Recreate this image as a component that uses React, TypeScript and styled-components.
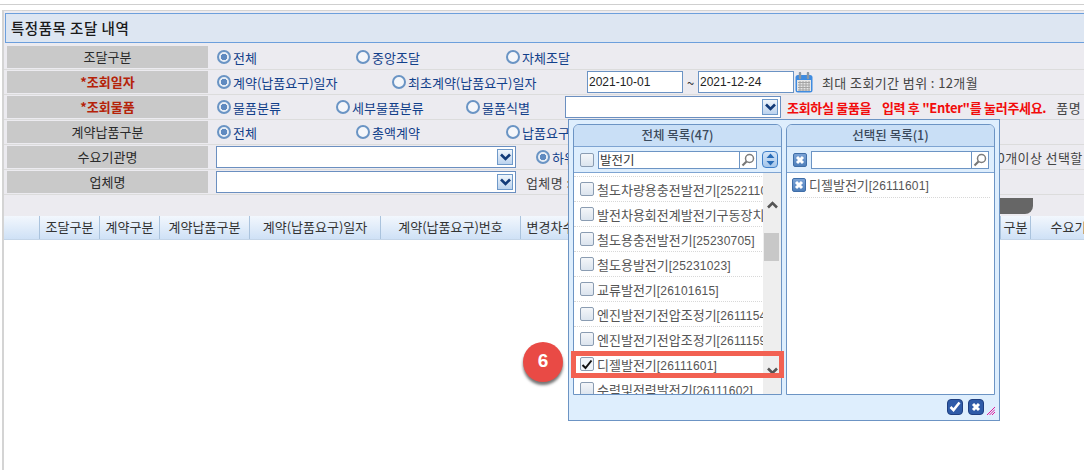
import { FC, ReactElement } from 'react';
import styled, { createGlobalStyle } from 'styled-components';

const GlobalStyle = createGlobalStyle`
    html, body {
        margin: 0;
        padding: 0;
        background: #ffffff;
    }
    body {
        width: 1084px;
        height: 470px;
        overflow: hidden;
        font-family: "Noto Sans CJK KR", "Liberation Sans", sans-serif;
        font-size: 13px;
        color: #333333;
    }
`;

const Chevron: FC<{ up?: boolean; color?: string }> = ({ up, color = '#123a78' }): ReactElement => (
    <svg width="11" height="8" viewBox="0 0 11 8">
        <path d={up ? 'M1 6.5 L5.5 2 L10 6.5' : 'M1 1.5 L5.5 6 L10 1.5'} fill="none" stroke={color} strokeWidth="2.6" />
    </svg>
);

const Magnifier: FC = (): ReactElement => (
    <svg width="14" height="14" viewBox="0 0 14 14">
        <circle cx="8.5" cy="5.5" r="4" fill="#ffffff" stroke="#7c7c7c" strokeWidth="1.5" />
        <path d="M5.5 8.5 L1.5 12.5" stroke="#777777" strokeWidth="2.2" />
    </svg>
);

const CrossMark: FC = (): ReactElement => (
    <svg width="10" height="10" viewBox="0 0 10 10">
        <path d="M2 2 L8 8 M8 2 L2 8" stroke="#ffffff" strokeWidth="3" />
    </svg>
);

const CheckMark: FC<{ color?: string; weight?: number }> = ({ color = '#ffffff', weight = 2.6 }): ReactElement => (
    <svg width="12" height="11" viewBox="0 0 12 11">
        <path d="M1.5 6 L4.5 9 L10.5 1.5" fill="none" stroke={color} strokeWidth={weight} />
    </svg>
);

const CalendarIcon: FC = (): ReactElement => (
    <svg width="18" height="21" viewBox="0 0 18 21">
        <rect x="0.5" y="3" width="17" height="17.5" rx="2.5" fill="#3f8be0" />
        <rect x="2" y="8" width="14" height="11" fill="#e6e6e6" />
        <path d="M5 1 V6 M13 1 V6" stroke="#8b97a5" strokeWidth="2.4" strokeLinecap="round" />
        <path
            d="M3 10.5 H15 M3 13 H15 M3 15.5 H15 M3 18 H15 M5 9 V19 M8 9 V19 M11 9 V19 M14 9 V19"
            stroke="#a4a4a4"
            strokeWidth="1"
        />
    </svg>
);

type RadioItem = { label: string; checked?: boolean; width: number };

const RadioGroup: FC<{ items: RadioItem[] }> = ({ items }): ReactElement => (
    <>
        {items.map((item) => (
            <RadioLabel key={item.label} $width={item.width}>
                <RadioDot $checked={item.checked} />
                {item.label}
            </RadioLabel>
        ))}
    </>
);

const LIST_ITEMS: { name: string; code: string; checked?: boolean }[] = [
    { name: '철도차량용충전발전기', code: '[25221107]' },
    { name: '발전차용회전계발전기구동장치', code: '[25171901]' },
    { name: '철도용충전발전기', code: '[25230705]' },
    { name: '철도용발전기', code: '[25231023]' },
    { name: '교류발전기', code: '[26101615]' },
    { name: '엔진발전기전압조정기', code: '[26111541]' },
    { name: '엔진발전기전압조정기', code: '[26111599]' },
    { name: '디젤발전기', code: '[26111601]', checked: true },
    { name: '수력및전력발전기', code: '[26111602]' }
];

const GRID_COLUMNS: { label: string; width: number }[] = [
    { label: '', width: 36 },
    { label: '조달구분', width: 60 },
    { label: '계약구분', width: 60 },
    { label: '계약납품구분', width: 90 },
    { label: '계약(납품요구)일자', width: 131 },
    { label: '계약(납품요구)번호', width: 140 },
    { label: '변경차수', width: 60 },
    { label: '', width: 420 },
    { label: '구분', width: 30 },
    { label: '수요기관명', width: 100 }
];

const App: FC = (): ReactElement => {
    return (
        <Page>
            <GlobalStyle />
            <TopRule />
            <Frame>
                <Search>
                    <Title>특정품목 조달 내역</Title>
                    <Row>
                        <RowLabel>조달구분</RowLabel>
                        <RowBody>
                            <RadioGroup
                                items={[
                                    { label: '전체', checked: true, width: 139 },
                                    { label: '중앙조달', width: 150 },
                                    { label: '자체조달', width: 100 }
                                ]}
                            />
                        </RowBody>
                    </Row>
                    <Row>
                        <RowLabel $required>*조회일자</RowLabel>
                        <RowBody>
                            <RadioGroup
                                items={[
                                    { label: '계약(납품요구)일자', checked: true, width: 175 },
                                    { label: '최초계약(납품요구)일자', width: 195 }
                                ]}
                            />
                            <DateInput value="2021-10-01" readOnly />
                            <Tilde>~</Tilde>
                            <DateInput value="2021-12-24" readOnly />
                            <CalendarSlot>
                                <CalendarIcon />
                            </CalendarSlot>
                            <Hint>최대 조회기간 범위 : 12개월</Hint>
                        </RowBody>
                    </Row>
                    <Row>
                        <RowLabel $required>*조회물품</RowLabel>
                        <RowBody>
                            <RadioGroup
                                items={[
                                    { label: '물품분류', checked: true, width: 119 },
                                    { label: '세부물품분류', width: 130 },
                                    { label: '물품식별', width: 99 }
                                ]}
                            />
                            <ComboBox $width={216}>
                                <ComboArrow>
                                    <Chevron />
                                </ComboArrow>
                            </ComboBox>
                            <Warning>조회하실 물품을&nbsp;&nbsp;&nbsp; 입력 후 "Enter"를 눌러주세요.</Warning>
                            <Hint $gap={10}>품명</Hint>
                        </RowBody>
                    </Row>
                    <Row>
                        <RowLabel>계약납품구분</RowLabel>
                        <RowBody>
                            <RadioGroup
                                items={[
                                    { label: '전체', checked: true, width: 139 },
                                    { label: '총액계약', width: 150 },
                                    { label: '납품요구', width: 100 }
                                ]}
                            />
                        </RowBody>
                    </Row>
                    <Row>
                        <RowLabel>수요기관명</RowLabel>
                        <RowBody $tight>
                            <ComboBox $width={300}>
                                <ComboArrow>
                                    <Chevron />
                                </ComboArrow>
                            </ComboBox>
                            <RadioSpacer />
                            <RadioGroup items={[{ label: '하위기관포함', checked: true, width: 454 }]} />
                            <Hint>10개이상 선택할</Hint>
                        </RowBody>
                    </Row>
                    <Row>
                        <RowLabel>업체명</RowLabel>
                        <RowBody $tight>
                            <ComboBox $width={300}>
                                <ComboArrow>
                                    <Chevron />
                                </ComboArrow>
                            </ComboBox>
                            <Hint $gap={10}>업체명 :</Hint>
                        </RowBody>
                    </Row>
                    <ButtonBar>
                        <DarkButton />
                    </ButtonBar>
                </Search>
                <GridHead>
                    {GRID_COLUMNS.map((column, index) => (
                        <GridCell key={index} $width={column.width}>
                            {column.label}
                        </GridCell>
                    ))}
                </GridHead>
            </Frame>

            <Popup>
                <PanelRow>
                    <Panel>
                        <PanelTitle>전체 목록(47)</PanelTitle>
                        <PanelTools>
                            <CheckBox />
                            <SearchField $width={159}>
                                <SearchText>발전기</SearchText>
                                <SearchButton>
                                    <Magnifier />
                                </SearchButton>
                            </SearchField>
                            <SortButton>
                                <svg width="9" height="13" viewBox="0 0 9 13">
                                    <path d="M4.5 0.5 L8.5 5 H0.5 Z M0.5 8 H8.5 L4.5 12.5 Z" fill="#2a6db8" />
                                </svg>
                            </SortButton>
                        </PanelTools>
                        <ListArea>
                            <ListScroll>
                                <TopFade />
                                {LIST_ITEMS.map((item) => (
                                    <ListRow key={item.code}>
                                        <CheckBox $checked={item.checked}>
                                            {item.checked && <CheckMark color="#111111" weight={2} />}
                                        </CheckBox>
                                        <ListText>
                                            {item.name}
                                            <Code>{item.code}</Code>
                                        </ListText>
                                    </ListRow>
                                ))}
                            </ListScroll>
                            <ScrollTrack>
                                <ScrollArrow>
                                    <Chevron up color="#555555" />
                                </ScrollArrow>
                                <ScrollThumb />
                                <ScrollArrow $bottom>
                                    <Chevron color="#555555" />
                                </ScrollArrow>
                            </ScrollTrack>
                        </ListArea>
                    </Panel>
                    <Panel>
                        <PanelTitle>선택된 목록(1)</PanelTitle>
                        <PanelTools>
                            <CrossBox>
                                <CrossMark />
                            </CrossBox>
                            <SearchField $width={178}>
                                <SearchText />
                                <SearchButton>
                                    <Magnifier />
                                </SearchButton>
                            </SearchField>
                        </PanelTools>
                        <ListArea>
                            <SelectedRow>
                                <CrossBox>
                                    <CrossMark />
                                </CrossBox>
                                <ListText>
                                    디젤발전기<Code>[26111601]</Code>
                                </ListText>
                            </SelectedRow>
                        </ListArea>
                    </Panel>
                </PanelRow>
                <PopupFooter>
                    <RoundButton>
                        <CheckMark />
                    </RoundButton>
                    <RoundButton>
                        <CrossMark />
                    </RoundButton>
                    <ResizeGrip>
                        <svg width="8" height="8" viewBox="0 0 8 8">
                            <path d="M0 8 L8 0 M2.5 8 L8 2.5 M5 8 L8 5" stroke="#e0189a" strokeWidth="1" />
                        </svg>
                    </ResizeGrip>
                </PopupFooter>
            </Popup>

            <Highlight />
            <StepBadge>6</StepBadge>
        </Page>
    );
};

const Page = styled.div`
    position: relative;
    width: 1084px;
    height: 470px;
    overflow: hidden;
`;
const TopRule = styled.div`
    height: 4px;
    border-bottom: 1px solid #cfcfcf;
`;
const Frame = styled.div`
    margin: 5px 0 0 2px;
    height: 460px;
    border-top: 1px solid #d4d4d4;
    border-left: 2px solid #d4d4d4;
    box-sizing: border-box;
`;
const Search = styled.div`
    height: 205px;
    background: #ecebf0;
    padding-top: 2px;
    box-sizing: border-box;
`;
const Title = styled.div`
    height: 30px;
    margin: 0 0 2px 1px;
    padding-left: 5px;
    box-sizing: border-box;
    border: 1px solid #6c9fdc;
    border-right: none;
    background: #dde6f2;
    font-size: 14.5px;
    font-weight: 500;
    line-height: 27px;
    letter-spacing: 0.5px;
    color: #1a1a1a;
`;
const Row = styled.div`
    display: flex;
    height: 25px;
    padding: 1px 0 1px 3px;
    box-sizing: border-box;
    border-bottom: 1px solid #dcdcdc;
`;
const RowLabel = styled.div<{ $required?: boolean }>`
    width: 201px;
    flex: none;
    text-align: center;
    background: #c9c9c9;
    line-height: 22px;
    font-weight: ${(p) => (p.$required ? 700 : 400)};
    color: ${(p) => (p.$required ? '#b52208' : '#2a2a2a')};
`;
const RowBody = styled.div<{ $tight?: boolean }>`
    display: flex;
    align-items: center;
    flex: 1;
    min-width: 0;
    white-space: nowrap;
    padding-left: ${(p) => (p.$tight ? 8 : 9)}px;
`;
const RadioLabel = styled.label<{ $width: number }>`
    display: flex;
    align-items: center;
    flex: none;
    width: ${(p) => p.$width}px;
    color: #12408a;
`;
const RadioDot = styled.span<{ $checked?: boolean }>`
    width: 14px;
    height: 14px;
    margin-right: 2px;
    flex: none;
    border-radius: 50%;
    box-sizing: border-box;
    border: 2.5px solid #6a94c4;
    background: ${(p) => (p.$checked ? 'radial-gradient(circle, #5f8ac0 0 3px, #e7edf5 3.5px)' : '#f4f6fa')};
`;
const RadioSpacer = styled.span`
    width: 20px;
    flex: none;
`;
const DateInput = styled.input`
    width: 96px;
    height: 22px;
    padding: 0 0 0 1px;
    box-sizing: border-box;
    border: 1px solid #6b93c4;
    background: #ffffff;
    font-family: "Liberation Sans", sans-serif;
    font-size: 12px;
    color: #222222;
    outline: none;
`;
const Tilde = styled.span`
    width: 15px;
    text-align: center;
    flex: none;
    color: #333333;
`;
const CalendarSlot = styled.span`
    display: flex;
    margin: 0 9px 0 1px;
`;
const Hint = styled.span<{ $gap?: number }>`
    margin-left: ${(p) => p.$gap ?? 0}px;
    color: #444444;
    letter-spacing: 0.4px;
`;
const ComboBox = styled.div<{ $width: number }>`
    display: flex;
    justify-content: flex-end;
    align-items: center;
    flex: none;
    width: ${(p) => p.$width}px;
    height: 22px;
    padding-right: 2px;
    box-sizing: border-box;
    border: 1px solid #6b8fc0;
    background: #ffffff;
`;
const ComboArrow = styled.span`
    display: flex;
    align-items: center;
    justify-content: center;
    width: 16px;
    height: 16px;
    box-sizing: border-box;
    border: 1px solid #6f99c9;
    background: linear-gradient(#f0f6fc, #bcd3ee);
`;
const Warning = styled.span`
    margin-left: 6px;
    color: #f20c0c;
    font-weight: 700;
    font-size: 13px;
    letter-spacing: -0.3px;
`;
const ButtonBar = styled.div`
    display: flex;
    justify-content: flex-end;
    height: 20px;
    padding: 3px 51px 0 0;
    box-sizing: border-box;
`;
const DarkButton = styled.div`
    width: 120px;
    height: 16px;
    background: #666666;
    border-radius: 0 0 8px 0;
`;
const GridHead = styled.div`
    display: flex;
    height: 24px;
    box-sizing: border-box;
    border-bottom: 1px solid #c4d5e8;
    background: linear-gradient(#f2f7fd, #cfe1f6);
    white-space: nowrap;
    overflow: hidden;
`;
const GridCell = styled.div<{ $width: number }>`
    flex: none;
    width: ${(p) => p.$width}px;
    box-sizing: border-box;
    border-right: 1px solid #aac3dd;
    text-align: center;
    line-height: 22px;
    color: #333333;
`;
const Popup = styled.div`
    position: absolute;
    left: 568px;
    top: 119px;
    width: 432px;
    height: 302px;
    padding: 4px 4px 0 4px;
    box-sizing: border-box;
    border: 1px solid #6c94c4;
    background: #deeefd;
`;
const PanelRow = styled.div`
    display: flex;
    gap: 4px;
    height: 271px;
`;
const Panel = styled.div`
    width: 209px;
    height: 271px;
    display: flex;
    flex-direction: column;
    box-sizing: border-box;
    border: 1px solid #6c94c4;
    border-radius: 6px 6px 0 0;
    overflow: hidden;
`;
const PanelTitle = styled.div`
    height: 22px;
    flex: none;
    box-sizing: border-box;
    border-bottom: 1px solid #7ea4d2;
    background: #c9dff6;
    text-align: center;
    line-height: 19px;
    font-size: 12.5px;
    font-weight: 500;
    color: #3b4a5c;
`;
const PanelTools = styled.div`
    display: flex;
    align-items: center;
    height: 26px;
    flex: none;
    padding-left: 6px;
    box-sizing: border-box;
    border-bottom: 1px solid #7ea4d2;
    background: #deeefd;
`;
const CheckBox = styled.span<{ $checked?: boolean }>`
    display: flex;
    align-items: center;
    justify-content: center;
    width: 14px;
    height: 14px;
    flex: none;
    box-sizing: border-box;
    border: 1px solid #8a9cb2;
    border-radius: 2px;
    background: ${(p) => (p.$checked ? '#f0f4f9' : 'linear-gradient(#f4f6f9, #dbe4ee)')};
`;
const CrossBox = styled.span`
    display: flex;
    align-items: center;
    justify-content: center;
    width: 14px;
    height: 14px;
    flex: none;
    box-sizing: border-box;
    border: 1px solid #3f6ea8;
    border-radius: 2px;
    background: linear-gradient(#7ba3d6, #4f7fba);
`;
const SearchField = styled.div<{ $width: number }>`
    display: flex;
    width: ${(p) => p.$width}px;
    height: 18px;
    margin-left: 4px;
    flex: none;
    box-sizing: border-box;
    border: 1px solid #6c94c4;
    background: #ffffff;
`;
const SearchText = styled.span`
    flex: 1;
    padding-left: 1px;
    line-height: 16px;
    font-size: 12.5px;
    color: #333333;
`;
const SearchButton = styled.span`
    display: flex;
    align-items: center;
    justify-content: center;
    width: 17px;
    box-sizing: border-box;
    border-left: 1px solid #6c94c4;
`;
const SortButton = styled.span`
    display: flex;
    align-items: center;
    justify-content: center;
    width: 16px;
    height: 17px;
    margin-left: 5px;
    box-sizing: border-box;
    border: 1px solid #3f7fc8;
    border-radius: 4px;
    background: linear-gradient(#d4e5f8, #a5c6ea);
`;
const ListArea = styled.div`
    position: relative;
    flex: 1;
    min-height: 0;
    overflow: hidden;
    background: #ffffff;
`;
const ListScroll = styled.div`
    width: 190px;
    overflow: hidden;
`;
const TopFade = styled.div`
    height: 3px;
    border-bottom: 1px dotted #d8d8d8;
`;
const ListRow = styled.div`
    display: flex;
    align-items: center;
    gap: 3px;
    height: 25px;
    padding-left: 6px;
    box-sizing: border-box;
    border-bottom: 1px dotted #d8d8d8;
    white-space: nowrap;
`;
const SelectedRow = styled(ListRow)`
    height: 25px;
    margin: 0 4px 0 3px;
    padding: 0 0 1px 2px;
`;
const ListText = styled.span`
    font-size: 13px;
    color: #555555;
`;
const Code = styled.span`
    font-family: "Liberation Sans", sans-serif;
    font-size: 12px;
    letter-spacing: 0.2px;
`;
const ScrollTrack = styled.div`
    position: absolute;
    right: 0;
    top: 0;
    bottom: 0;
    width: 18px;
    background: #eeeeee;
`;
const ScrollArrow = styled.span<{ $bottom?: boolean }>`
    position: absolute;
    left: 4px;
    ${(p) => (p.$bottom ? 'bottom: 15px;' : 'top: 21px;')}
`;
const ScrollThumb = styled.div`
    position: absolute;
    left: 1px;
    top: 60px;
    width: 15px;
    height: 28px;
    background: #c8c8c8;
`;
const PopupFooter = styled.div`
    display: flex;
    justify-content: flex-end;
    align-items: center;
    gap: 5px;
    height: 23px;
    padding-right: 0;
`;
const RoundButton = styled.span`
    display: flex;
    align-items: center;
    justify-content: center;
    width: 16px;
    height: 16px;
    box-sizing: border-box;
    border: 1px solid #1f3f80;
    border-radius: 4px;
    background: #2f5ba8;
`;
const ResizeGrip = styled.span`
    display: flex;
    align-self: flex-end;
    margin: 0 0 3px -2px;
`;
const Highlight = styled.div`
    position: absolute;
    left: 571px;
    top: 351px;
    width: 213px;
    height: 27px;
    box-sizing: border-box;
    border: 5px solid #f26152;
`;
const StepBadge = styled.div`
    position: absolute;
    left: 523px;
    top: 342px;
    width: 40px;
    height: 40px;
    border-radius: 50%;
    background: #e94a45;
    box-shadow: 0 3px 3px rgba(0, 0, 0, 0.55);
    text-align: center;
    line-height: 38px;
    font-family: "Liberation Sans", sans-serif;
    font-size: 19px;
    font-weight: 700;
    color: #ffffff;
`;

export default App;
